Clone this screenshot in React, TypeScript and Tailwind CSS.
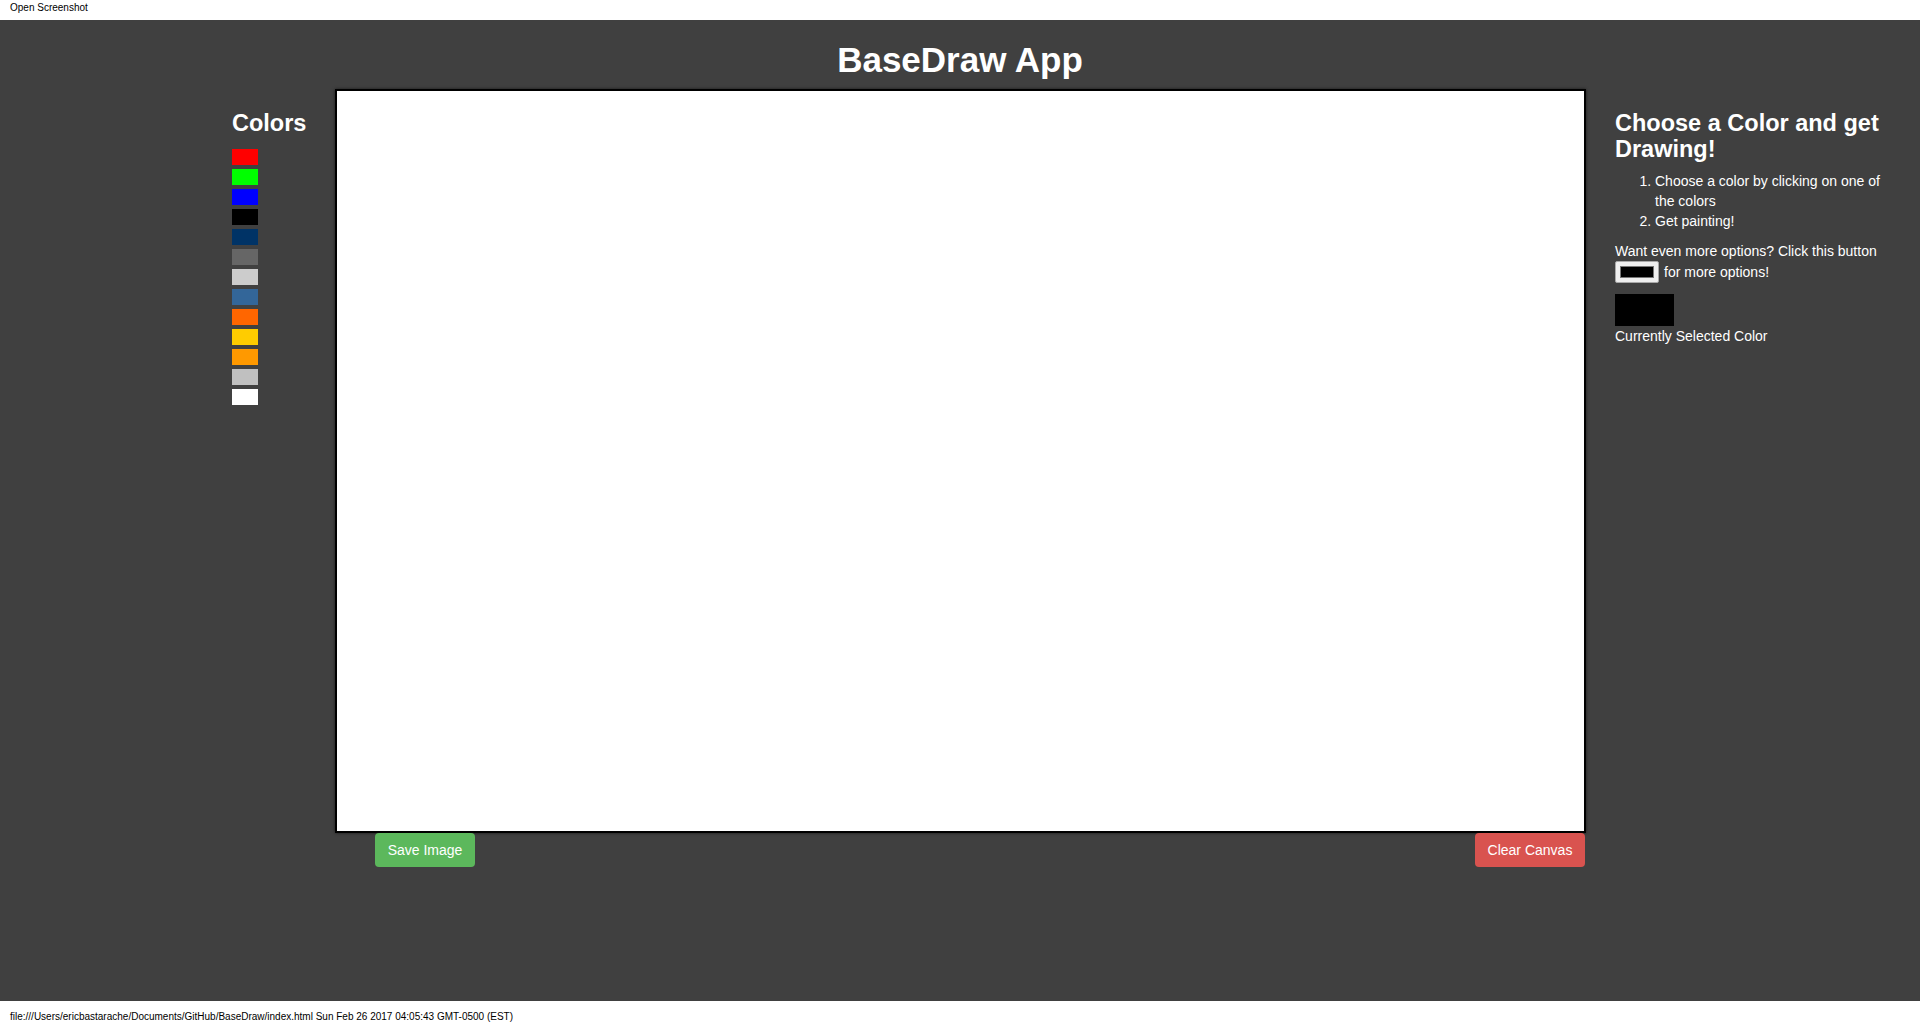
const swatches = [
  "#ff0000",
  "#00ff00",
  "#0000ff",
  "#000000",
  "#003366",
  "#666666",
  "#cccccc",
  "#336699",
  "#ff6600",
  "#ffcc00",
  "#ff9900",
  "#c0c0c0",
  "#ffffff",
];

export default function App() {
  return (
    <div className="flex flex-col h-[1023px] w-[1920px] overflow-hidden font-['Liberation_Sans',Arial,sans-serif]">
      <div className="h-[20px] bg-white text-[10px] leading-[14px] text-black pl-[10px] pt-[1px]">
        Open Screenshot
      </div>

      <main className="h-[981px] bg-[#404040] text-white">
        <h1 className="mt-[20px] text-center text-[35px] leading-[40px] font-bold">BaseDraw App</h1>

        <div className="flex mt-[9px]">
          {/* colors */}
          <div className="w-[335px] pl-[232px]">
            <h3 className="mt-[21px] text-[23.5px] leading-[26px] font-bold">Colors</h3>
            <div className="mt-[13px] flex flex-col gap-[4px]">
              {swatches.map((c) => (
                <div key={c} className="w-[26px] h-[16px]" style={{ backgroundColor: c }} />
              ))}
            </div>
          </div>

          {/* canvas */}
          <div className="w-[1251px]">
            <div className="h-[744px] bg-white border-2 border-black shadow-[0_0_3px_rgba(0,0,0,0.6)]" />
            <div className="flex justify-between pl-[40px]">
              <button className="w-[100px] h-[34px] rounded-[4px] bg-[#5cb85c] text-[14px] text-white">
                Save Image
              </button>
              <button className="w-[110px] h-[34px] rounded-[4px] bg-[#d9534f] text-[14px] text-white mr-[1px]">
                Clear Canvas
              </button>
            </div>
          </div>

          {/* instructions */}
          <div className="pl-[29px]">
            <div className="w-[280px]">
              <h3 className="mt-[21px] text-[23.5px] leading-[26px] font-bold">Choose a Color and get Drawing!</h3>
              <ol className="mt-[9px] list-decimal pl-[40px] text-[14px] leading-[20px]">
                <li>Choose a color by clicking on one of the colors</li>
                <li>Get painting!</li>
              </ol>
              <p className="mt-[10px] text-[14px] leading-[20px]">Want even more options? Click this button</p>
              <div className="flex items-center gap-[5px] h-[22px] text-[14px] leading-[20px]">
                <div className="w-[44px] h-[22px] bg-[#efefef] border border-[#a9a9a9] rounded-[2px] p-[4px]">
                  <div className="w-full h-full bg-black border border-[#777]" />
                </div>
                <span>for more options!</span>
              </div>
              <div className="mt-[11px] w-[59px] h-[32px] bg-black" />
              <p className="text-[14px] leading-[20px]">Currently Selected Color</p>
            </div>
          </div>
        </div>
      </main>

      <div className="h-[22px] bg-white text-[10px] leading-[14px] text-black pl-[10px] pt-[9px]">
        file:///Users/ericbastarache/Documents/GitHub/BaseDraw/index.html Sun Feb 26 2017 04:05:43 GMT-0500 (EST)
      </div>
    </div>
  );
}
